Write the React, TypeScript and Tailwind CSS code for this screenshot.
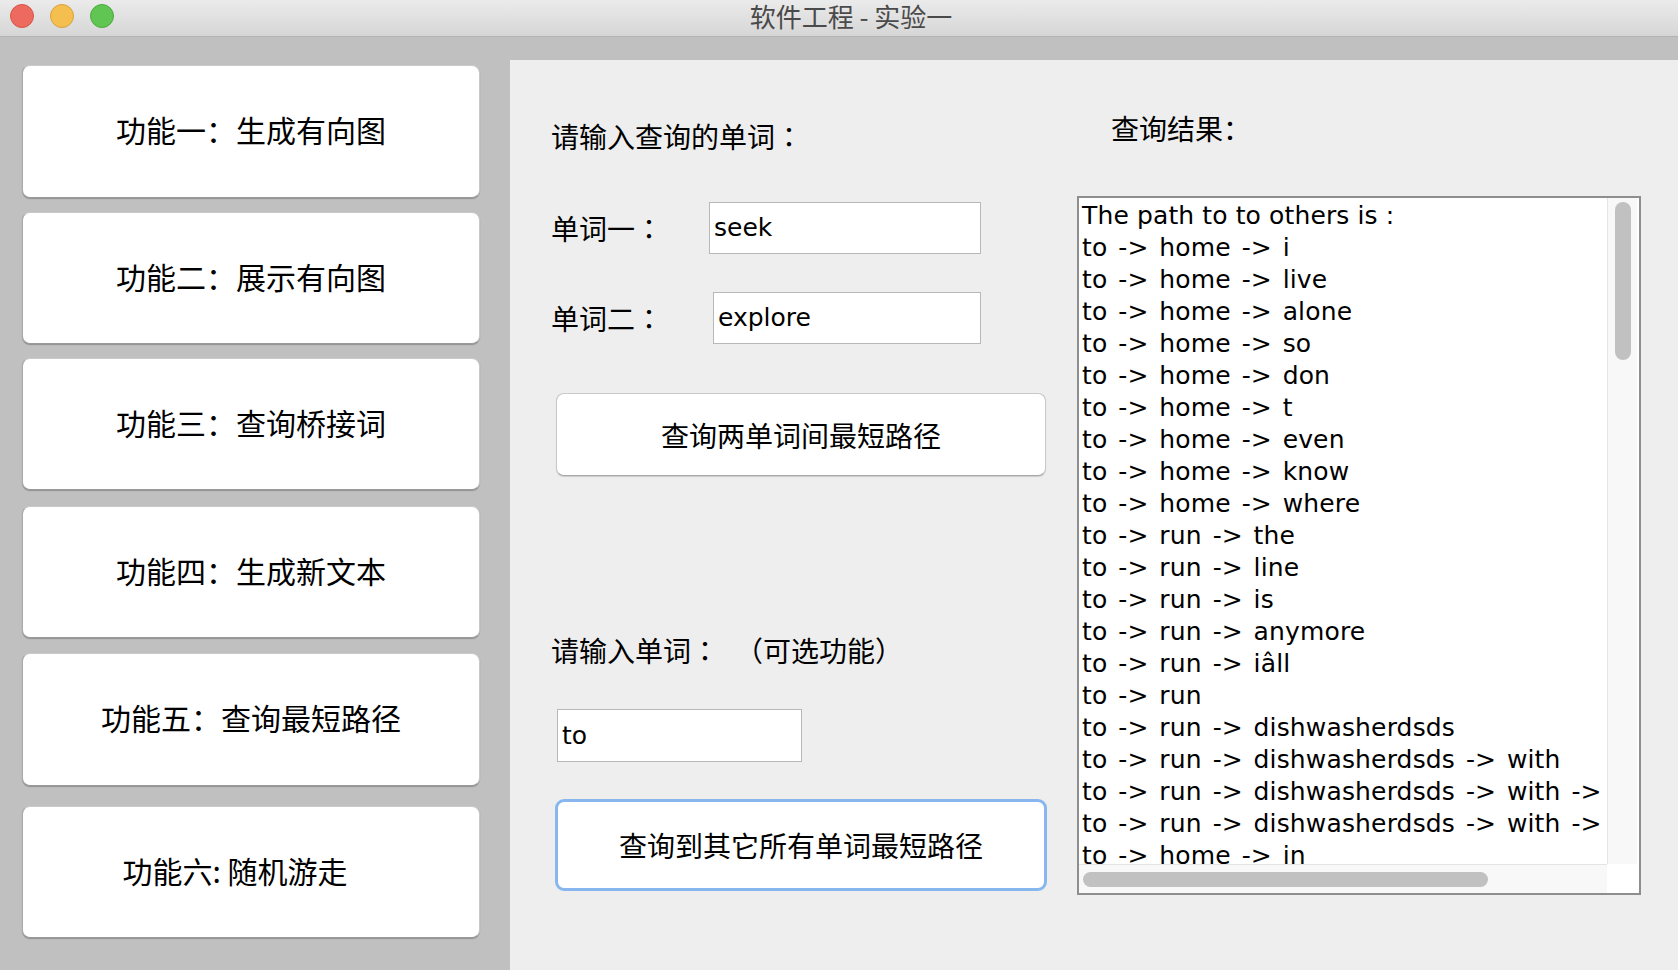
import React from "react";

const menu = [
  { label: "功能一：生成有向图", cls: "mt-[28px] h-[133px]" },
  { label: "功能二：展示有向图", cls: "mt-[14px] h-[132px]" },
  { label: "功能三：查询桥接词", cls: "mt-[14px] h-[132px]" },
  { label: "功能四：生成新文本", cls: "mt-[16px] h-[132px]" },
  { label: "功能五：查询最短路径", cls: "mt-[15px] h-[133px]" },
  { label: "功能六: 随机游走", cls: "mt-[20px] h-[132px] pr-[32px]" },
];

const lines = [
  "The path to to others is :",
  "to -> home -> i",
  "to -> home -> live",
  "to -> home -> alone",
  "to -> home -> so",
  "to -> home -> don",
  "to -> home -> t",
  "to -> home -> even",
  "to -> home -> know",
  "to -> home -> where",
  "to -> run -> the",
  "to -> run -> line",
  "to -> run -> is",
  "to -> run -> anymore",
  "to -> run -> iâll",
  "to -> run",
  "to -> run -> dishwasherdsds",
  "to -> run -> dishwasherdsds -> with",
  "to -> run -> dishwasherdsds -> with ->",
  "to -> run -> dishwasherdsds -> with ->",
  "to -> home -> in",
];

const cjk = "font-['Noto_Sans_CJK_SC',sans-serif]";
const latin = "font-['DejaVu_Sans','Noto_Sans_CJK_SC',sans-serif]";
// centred full-width colon, like the mac label font
const colon = "font-['Noto_Sans_CJK_TC',sans-serif]";

const PathLine = ({ text }: { text: string }) => {
  const parts = text.split(" ");
  return (
    <div className="h-[32px] leading-[32px] whitespace-nowrap">
      {parts.map((p, i) => (
        <React.Fragment key={i}>
          {i > 0 && " "}
          {p === "->" ? (
            <span className="mx-[3px]">-&gt;</span>
          ) : (
            <span className="tracking-[0.15px]">{p}</span>
          )}
        </React.Fragment>
      ))}
    </div>
  );
};

const App = () => {
  return (
    <div className={`w-[1678px] h-[970px] flex flex-col bg-[#c0c0c0] overflow-hidden text-black ${cjk}`}>
      {/* title bar */}
      <div className="h-[37px] flex bg-gradient-to-b from-[#ebebeb] to-[#d6d6d6] border-b border-[#b2b2b2]">
        <div className="w-[120px] flex gap-[16px] pl-[10px] pt-[4px]">
          <div className="w-[24px] h-[24px] rounded-full bg-[#ed6a5e] border border-[#d65648]" />
          <div className="w-[24px] h-[24px] rounded-full bg-[#f5bf4f] border border-[#d7a13f]" />
          <div className="w-[24px] h-[24px] rounded-full bg-[#61c554] border border-[#4ea93d]" />
        </div>
        <div className="flex-1 pr-[96px] text-center text-[26px] leading-[34px] -mt-[1px] text-[#4a4a4a] whitespace-pre">
          软件工程 - 实验一
        </div>
      </div>

      <div className="flex-1 flex">
        {/* left menu */}
        <div className="w-[510px] pl-[22px] flex flex-col">
          {menu.map((m) => (
            <div
              key={m.label}
              className={`w-[458px] flex items-center justify-center pb-[4px] bg-white rounded-[8px] border border-[#c9c9c9] border-l-[#a9a9a9] border-b-[#9a9a9a] shadow-[0_1px_1px_rgba(0,0,0,0.25)] text-[30px] ${m.cls}`}
            >
              {m.label}
            </div>
          ))}
        </div>

        {/* right panel */}
        <div className="flex-1 mt-[23px] bg-[#eeeeee] flex">
          <div className="w-[537px] pl-[41px] flex flex-col text-[28px]">
            <div className="mt-[56px] h-[40px] leading-[40px]">
              请输入查询的单词<span className={colon}>：</span>
            </div>
            <div className="mt-[46px] h-[52px] flex items-center">
              <div className="w-[158px] leading-[40px]">
                单词一<span className={colon}>：</span>
              </div>
              <div className={`w-[272px] h-[52px] bg-white border border-[#b8b8b8] pl-[4px] flex items-center text-[25px] ${latin}`}>
                seek
              </div>
            </div>
            <div className="mt-[38px] h-[52px] flex items-center">
              <div className="w-[162px] leading-[40px]">
                单词二<span className={colon}>：</span>
              </div>
              <div className={`w-[268px] h-[52px] bg-white border border-[#b8b8b8] pl-[4px] flex items-center text-[25px] ${latin}`}>
                explore
              </div>
            </div>
            <div className="mt-[49px] ml-[5px] w-[490px] h-[83px] bg-white rounded-[8px] border border-[#c8c8c8] border-b-[#a8a8a8] shadow-[0_1px_1px_rgba(0,0,0,0.15)] flex items-center justify-center">
              查询两单词间最短路径
            </div>
            <div className="mt-[154px] h-[40px] leading-[40px] flex">
              <span>
                请输入单词<span className={colon}>：</span>
              </span>
              <span className="ml-[16px]">（可选功能）</span>
            </div>
            <div className={`mt-[39px] ml-[6px] w-[245px] h-[53px] bg-white border border-[#b8b8b8] pl-[4px] flex items-center text-[25px] ${latin}`}>
              to
            </div>
            <div className="mt-[37px] ml-[4px] w-[492px] h-[92px] bg-white rounded-[9px] border-[3px] border-[#88b7ef] flex items-center justify-center">
              查询到其它所有单词最短路径
            </div>
          </div>

          <div className="pl-[30px] flex flex-col">
            <div className="mt-[48px] ml-[34px] h-[40px] leading-[40px] text-[28px]">查询结果：</div>
            <div className="mt-[48px] w-[564px] h-[699px] border-2 border-[#8e8e8e] bg-white flex flex-col">
              <div className="h-[666px] flex">
                <div className={`w-[528px] overflow-hidden pt-[2px] pl-[3px] text-[25px] ${latin}`}>
                  {lines.map((l, i) => (
                    <PathLine key={i} text={l} />
                  ))}
                </div>
                <div className="w-[30px] bg-[#f8f8f8] border-l border-[#e4e4e4] pl-[7px] pt-[4px]">
                  <div className="w-[16px] h-[158px] rounded-full bg-[#c1c1c1]" />
                </div>
              </div>
              <div className="flex-1 flex">
                <div className="w-[528px] bg-[#f8f8f8] border-t border-[#e4e4e4] pl-[4px] pt-[7px]">
                  <div className="w-[405px] h-[15px] rounded-full bg-[#c1c1c1]" />
                </div>
                <div className="w-[30px] bg-white" />
              </div>
            </div>
          </div>
        </div>
      </div>
    </div>
  );
};

export default App;
